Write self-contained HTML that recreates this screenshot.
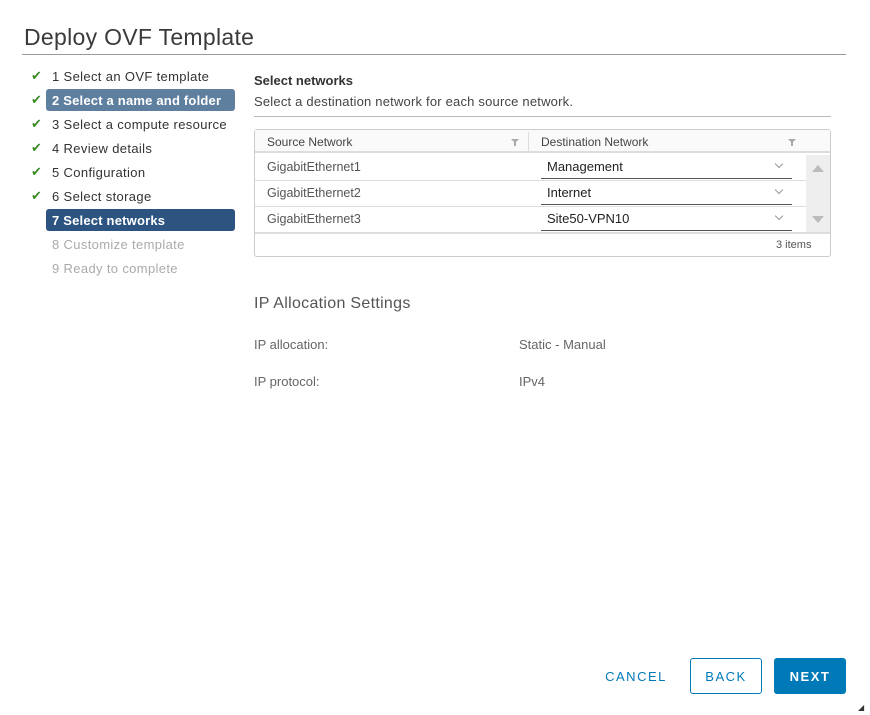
<!DOCTYPE html>
<html><head><style>
*{box-sizing:border-box;margin:0;padding:0}
body{width:870px;height:715px;background:#fff;font-family:"Liberation Sans",sans-serif;position:relative;overflow:hidden;color:#333}
.a{position:absolute}
.title{left:24px;top:24px;font-size:23px;color:#3a3a3a;letter-spacing:0.3px}
.hr{left:22px;top:54px;width:824px;height:1px;background:#999}
.step{position:absolute;left:46px;width:189px;height:22px;font-size:13px;line-height:23px;padding-left:6px;color:#333;border-radius:3px;letter-spacing:0.35px}
.chk{position:absolute;left:31px;color:#3c8c26;font-size:13px}
.t{font-size:13px}
.cell{position:absolute;font-size:12.5px;color:#555}
.dd{position:absolute;left:541px;width:251px;height:24px;border-bottom:1px solid #555;font-size:13px;color:#222;padding-left:6px;line-height:24px}
.dd:after{content:"";position:absolute;right:10px;top:6px;width:5px;height:5px;border-right:1px solid #999;border-bottom:1px solid #999;transform:rotate(45deg)}
.rl{position:absolute;left:255px;width:551px;height:1px;background:#ddd}
.btn{position:absolute;top:658px;height:36px;font-size:13px;letter-spacing:1.5px;text-align:center;line-height:37px;border-radius:3px}
</style></head><body>
<div class="a title">Deploy OVF Template</div>
<div class="a hr"></div>

<div class="chk" style="top:68px">✔</div>
<div class="step" style="top:65px">1 Select an OVF template</div>
<div class="chk" style="top:92px">✔</div>
<div class="step" style="top:89px;background:#5f7f9f;color:#fff;font-weight:bold;letter-spacing:0.2px">2 Select a name and folder</div>
<div class="chk" style="top:116px">✔</div>
<div class="step" style="top:113px">3 Select a compute resource</div>
<div class="chk" style="top:140px">✔</div>
<div class="step" style="top:137px">4 Review details</div>
<div class="chk" style="top:164px">✔</div>
<div class="step" style="top:161px">5 Configuration</div>
<div class="chk" style="top:188px">✔</div>
<div class="step" style="top:185px">6 Select storage</div>
<div class="step" style="top:209px;background:#2d5480;color:#fff;font-weight:bold;letter-spacing:0.2px">7 Select networks</div>
<div class="step" style="top:233px;color:#aaa">8 Customize template</div>
<div class="step" style="top:257px;color:#aaa">9 Ready to complete</div>

<div class="a t" style="left:254px;top:73px;font-weight:bold;color:#333">Select networks</div>
<div class="a t" style="left:254px;top:94px;color:#444;letter-spacing:0.2px">Select a destination network for each source network.</div>
<div class="a" style="left:254px;top:116px;width:577px;height:1px;background:#bbb"></div>

<div class="a" style="left:254px;top:129px;width:577px;height:128px;border:1px solid #ccc;border-radius:3px"></div>
<div class="a" style="left:255px;top:130px;width:575px;height:23px;background:#fafafa;border-bottom:2px solid #ddd"></div>
<div class="a" style="left:528px;top:132px;width:1px;height:20px;background:#ddd"></div>
<div class="cell" style="left:267px;top:135px;color:#444;font-size:12px">Source Network</div>
<div class="cell" style="left:541px;top:135px;color:#444;font-size:12px">Destination Network</div>
<div class="a" style="left:511px;top:139px;border-left:4px solid transparent;border-right:4px solid transparent;border-top:4px solid #aaa"></div>
<div class="a" style="left:514px;top:142px;width:2px;height:4px;background:#aaa"></div>
<div class="a" style="left:788px;top:139px;border-left:4px solid transparent;border-right:4px solid transparent;border-top:4px solid #aaa"></div>
<div class="a" style="left:791px;top:142px;width:2px;height:4px;background:#aaa"></div>
<div class="a" style="left:806px;top:155px;width:24px;height:77px;background:#eee"></div>
<div class="a" style="left:812px;top:165px;border-left:6px solid transparent;border-right:6px solid transparent;border-bottom:7px solid #bbb"></div>
<div class="a" style="left:812px;top:216px;border-left:6px solid transparent;border-right:6px solid transparent;border-top:7px solid #bbb"></div>

<div class="cell" style="left:267px;top:160px">GigabitEthernet1</div>
<div class="dd" style="top:155px">Management</div>
<div class="rl" style="top:180px"></div>
<div class="cell" style="left:267px;top:186px">GigabitEthernet2</div>
<div class="dd" style="top:181px">Internet</div>
<div class="rl" style="top:206px"></div>
<div class="cell" style="left:267px;top:212px">GigabitEthernet3</div>
<div class="dd" style="top:207px">Site50-VPN10</div>
<div class="a" style="left:255px;top:232px;width:575px;height:2px;background:#ddd"></div>
<div class="cell" style="left:776px;top:239px;font-size:11px">3 items</div>

<div class="a" style="left:254px;top:295px;font-size:16px;color:#555;letter-spacing:0.3px">IP Allocation Settings</div>
<div class="a t" style="left:254px;top:337px;color:#666">IP allocation:</div>
<div class="a t" style="left:519px;top:337px;color:#666">Static - Manual</div>
<div class="a t" style="left:254px;top:374px;color:#666">IP protocol:</div>
<div class="a t" style="left:519px;top:374px;color:#666">IPv4</div>

<div class="btn" style="left:597px;width:78px;color:#0079b8">CANCEL</div>
<div class="btn" style="left:690px;width:72px;border:1px solid #0079b8;color:#0079b8;line-height:35px">BACK</div>
<div class="btn" style="left:774px;width:72px;background:#0079b8;color:#fff;font-weight:bold">NEXT</div>
<div class="a" style="left:858px;top:703px;font-size:8px;color:#333">◢</div>
</body></html>
